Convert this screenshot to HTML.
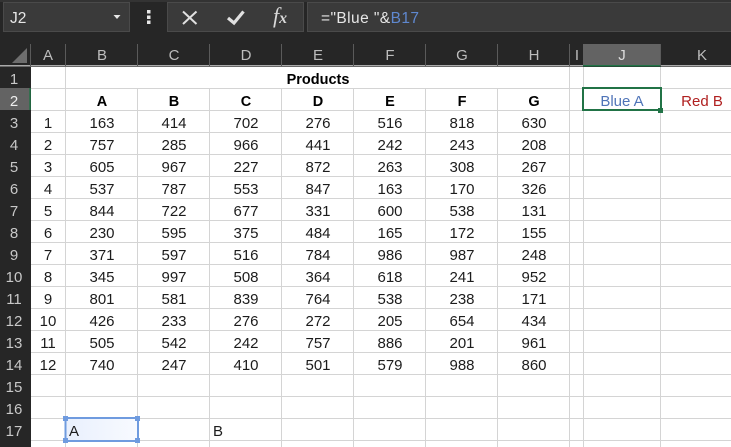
<!DOCTYPE html>
<html><head><meta charset="utf-8">
<style>
html,body{margin:0;padding:0;background:#262626;overflow:hidden;width:731px;height:447px}
svg{display:block;position:absolute;left:0;top:0}
text{font-family:"Liberation Sans",sans-serif}
.c text{font-size:15px;fill:#1c1c1c;text-anchor:middle}
.b text{font-size:14.5px;font-weight:bold;fill:#000;text-anchor:middle}
.h text{font-size:15px;fill:#bdbdbd;text-anchor:middle}
.r text{font-size:15px;fill:#c8c8c8;text-anchor:middle}
</style></head><body>
<svg width="731" height="447" viewBox="0 0 731 447">
<defs><linearGradient id="g" x1="0" y1="0" x2="1" y2="0"><stop offset="0" stop-color="#e9f0fd"/><stop offset="1" stop-color="#f8faff"/></linearGradient></defs>
<rect width="731" height="447" fill="#262626"/>
<!-- top bar -->
<rect x="0" y="0" width="731" height="2" fill="#333"/>
<rect x="3.500" y="2.500" width="126" height="29" fill="#3a3a3a" stroke="#4a4a4a"/>
<text x="10" y="23" font-size="15.5" fill="#e6e6e6">J2</text>
<path d="M113.500 15h7l-3.500 4z" fill="#e6e6e6"/>
<rect x="147" y="10" width="3.500" height="3.500" fill="#e6e6e6"/><rect x="147" y="15.500" width="3.500" height="3.500" fill="#e6e6e6"/><rect x="147" y="20.500" width="3.500" height="3.500" fill="#e6e6e6"/>
<rect x="167.500" y="2.500" width="136" height="29" fill="#3a3a3a" stroke="#4a4a4a"/>
<path d="M183 11.500l13.500 12.500M196.500 11.500L183 24" stroke="#e0e0e0" stroke-width="2" fill="none"/>
<path d="M228 18l6 5 9.500-11.500" stroke="#e0e0e0" stroke-width="3.200" fill="none"/>
<text x="273" y="23" fill="#d8d8d8" style="font-family:'Liberation Serif',serif;font-style:italic;font-size:22px">f<tspan style="font-size:16px;font-weight:bold" dx="0">x</tspan></text>
<rect x="307.500" y="2.500" width="424" height="29" fill="#3a3a3a" stroke="#4a4a4a"/>
<text x="321" y="23" font-size="15.5" fill="#e6e6e6" textLength="98" lengthAdjust="spacing">="Blue "&amp;<tspan fill="#5f88cf">B17</tspan></text>
<!-- sheet -->
<rect x="31" y="67" width="700" height="380" fill="#fff"/>
<!-- row headers -->
<rect x="0" y="88" width="30" height="22" fill="#636363"/>
<rect x="583" y="44" width="78" height="22" fill="#636363"/>
<rect x="0" y="65" width="731" height="1.500" fill="#aaa"/>
<rect x="583" y="65" width="78" height="1.500" fill="#217346"/>
<rect x="29.300" y="88" width="1.500" height="22" fill="#217346"/>
<path d="M27 48v15H12z" fill="#6e6e6e"/>
<!-- grid -->
<g stroke="#d4d4d4" stroke-width="1" fill="none">
<path d="M65.500 67V447M137.500 88V447M209.500 88V447M281.500 88V447M353.500 88V447M425.500 88V447M497.500 88V447M569.500 67V447M583.500 67V447M660.500 67V447"/>
<path d="M31 88.500H731M31 110.500H731M31 132.500H731M31 154.500H731M31 176.500H731M31 198.500H731M31 220.500H731M31 242.500H731M31 264.500H731M31 286.500H731M31 308.500H731M31 330.500H731M31 352.500H731M31 374.500H731M31 396.500H731M31 418.500H731M31 440.500H731"/>
</g>
<g stroke="#5a5a5a" stroke-width="1"><path d="M30.500 44V66M65.500 44V66M137.500 44V66M209.500 44V66M281.500 44V66M353.500 44V66M425.500 44V66M497.500 44V66M569.500 44V66M660.500 44V66"/></g>
<g class="h"><text x="48" y="60">A</text><text x="102" y="60">B</text><text x="174" y="60">C</text><text x="246" y="60">D</text><text x="318" y="60">E</text><text x="390" y="60">F</text><text x="462" y="60">G</text><text x="534" y="60">H</text><text x="577" y="60">I</text><text x="622" y="60" style="fill:#ddd">J</text><text x="702" y="60">K</text></g>
<g class="r"><text x="14" y="84">1</text><text x="14" y="106" style="fill:#eee">2</text><text x="14" y="128">3</text><text x="14" y="150">4</text><text x="14" y="172">5</text><text x="14" y="194">6</text><text x="14" y="216">7</text><text x="14" y="238">8</text><text x="14" y="260">9</text><text x="14" y="282">10</text><text x="14" y="304">11</text><text x="14" y="326">12</text><text x="14" y="348">13</text><text x="14" y="370">14</text><text x="14" y="392">15</text><text x="14" y="414">16</text><text x="14" y="436">17</text></g>
<rect x="66" y="68" width="503" height="20" fill="#fff"/>
<g class="b"><text x="318" y="84">Products</text><text x="102" y="106">A</text><text x="174" y="106">B</text><text x="246" y="106">C</text><text x="318" y="106">D</text><text x="390" y="106">E</text><text x="462" y="106">F</text><text x="534" y="106">G</text></g>
<g class="c">
<g transform="translate(0,128)"><text x="48">1</text><text x="102">163</text><text x="174">414</text><text x="246">702</text><text x="318">276</text><text x="390">516</text><text x="462">818</text><text x="534">630</text></g>
<g transform="translate(0,150)"><text x="48">2</text><text x="102">757</text><text x="174">285</text><text x="246">966</text><text x="318">441</text><text x="390">242</text><text x="462">243</text><text x="534">208</text></g>
<g transform="translate(0,172)"><text x="48">3</text><text x="102">605</text><text x="174">967</text><text x="246">227</text><text x="318">872</text><text x="390">263</text><text x="462">308</text><text x="534">267</text></g>
<g transform="translate(0,194)"><text x="48">4</text><text x="102">537</text><text x="174">787</text><text x="246">553</text><text x="318">847</text><text x="390">163</text><text x="462">170</text><text x="534">326</text></g>
<g transform="translate(0,216)"><text x="48">5</text><text x="102">844</text><text x="174">722</text><text x="246">677</text><text x="318">331</text><text x="390">600</text><text x="462">538</text><text x="534">131</text></g>
<g transform="translate(0,238)"><text x="48">6</text><text x="102">230</text><text x="174">595</text><text x="246">375</text><text x="318">484</text><text x="390">165</text><text x="462">172</text><text x="534">155</text></g>
<g transform="translate(0,260)"><text x="48">7</text><text x="102">371</text><text x="174">597</text><text x="246">516</text><text x="318">784</text><text x="390">986</text><text x="462">987</text><text x="534">248</text></g>
<g transform="translate(0,282)"><text x="48">8</text><text x="102">345</text><text x="174">997</text><text x="246">508</text><text x="318">364</text><text x="390">618</text><text x="462">241</text><text x="534">952</text></g>
<g transform="translate(0,304)"><text x="48">9</text><text x="102">801</text><text x="174">581</text><text x="246">839</text><text x="318">764</text><text x="390">538</text><text x="462">238</text><text x="534">171</text></g>
<g transform="translate(0,326)"><text x="48">10</text><text x="102">426</text><text x="174">233</text><text x="246">276</text><text x="318">272</text><text x="390">205</text><text x="462">654</text><text x="534">434</text></g>
<g transform="translate(0,348)"><text x="48">11</text><text x="102">505</text><text x="174">542</text><text x="246">242</text><text x="318">757</text><text x="390">886</text><text x="462">201</text><text x="534">961</text></g>
<g transform="translate(0,370)"><text x="48">12</text><text x="102">740</text><text x="174">247</text><text x="246">410</text><text x="318">501</text><text x="390">579</text><text x="462">988</text><text x="534">860</text></g>
</g>
<!-- J2 selection -->
<rect x="583" y="88" width="78" height="22" fill="#fff" stroke="#217346" stroke-width="2"/>
<rect x="658" y="108" width="5" height="5" fill="#217346"/>
<text x="622" y="106" font-size="15" fill="#4f74b8" text-anchor="middle">Blue A</text>
<text x="702" y="106" font-size="15" fill="#b02020" text-anchor="middle">Red B</text>
<!-- textbox -->
<rect x="65.500" y="418" width="72.500" height="23" fill="url(#g)" stroke="#6f9bdf" stroke-width="2"/>
<g fill="#6f9bdf"><rect x="63" y="416" width="5" height="5"/><rect x="135" y="416" width="5" height="5"/><rect x="63" y="438" width="5" height="5"/><rect x="135" y="438" width="5" height="5"/></g>
<text x="69" y="436" font-size="15" fill="#1c1c1c">A</text>
<text x="213" y="436" font-size="15" fill="#1c1c1c">B</text>
</svg>
</body></html>
